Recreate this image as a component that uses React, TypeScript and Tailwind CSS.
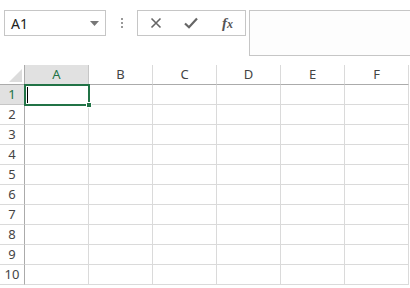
import React from 'react';

const cols = ['A', 'B', 'C', 'D', 'E', 'F'];
const rows = [1, 2, 3, 4, 5, 6, 7, 8, 9, 10];

export default function App() {
  return (
    <div className="h-[288px] w-[410px] overflow-hidden bg-white font-['Noto_Sans',sans-serif] text-[#444]">
      {/* Formula bar */}
      <div className="flex h-[65px] items-start pt-[10px]">
        <div className="ml-[4px] flex h-[26px] w-[102px] items-center justify-between border border-[#c6c6c6] bg-white pl-[6px] pr-[6px]">
          <span className="text-[14px] text-[#222]">A1</span>
          <svg width="9" height="5" viewBox="0 0 9 5">
            <path d="M0 0h9L4.5 5z" fill="#777" />
          </svg>
        </div>
        <div className="ml-[15px] mt-[8px] flex flex-col gap-[2px]">
          <span className="h-[2px] w-[2px] bg-[#999]" />
          <span className="h-[2px] w-[2px] bg-[#999]" />
          <span className="h-[2px] w-[2px] bg-[#999]" />
        </div>
        <div className="ml-[14px] flex h-[26px] w-[109px] items-center border border-[#c6c6c6] bg-white">
          <svg className="ml-[12px]" width="12" height="12" viewBox="0 0 12 12">
            <path d="M1.5 1.5l9 9M10.5 1.5l-9 9" stroke="#666" strokeWidth="1.6" />
          </svg>
          <svg className="ml-[22px]" width="14" height="12" viewBox="0 0 14 12">
            <path d="M1 6.5l4 3.8L13 1.5" stroke="#666" strokeWidth="2.2" fill="none" />
          </svg>
          <span className="ml-[24px] font-['Liberation_Serif',serif] text-[15px] font-semibold italic text-[#555]">
            f<span className="text-[12px]">x</span>
          </span>
        </div>
        <div className="ml-[3px] h-[46px] flex-1 border border-r-0 border-[#c6c6c6] bg-[#fdfdfd]" />
      </div>

      {/* Grid */}
      <div className="relative grid grid-cols-[25px_repeat(6,64px)] grid-rows-[20px_repeat(10,20px)]">
        <div className="relative border-r border-b border-[#ababab] bg-white">
          <svg className="absolute bottom-[2px] right-[2px]" width="13" height="13" viewBox="0 0 13 13">
            <path d="M13 0v13H0z" fill="#dcdcdc" />
          </svg>
        </div>
        {cols.map((c) => (
          <div
            key={c}
            className={
              c === 'A'
                ? 'flex items-center justify-center border-r border-b border-r-[#c6c6c6] border-b-[#ababab] bg-[#e1e1e1] text-[13px] text-[#217346]'
                : 'flex items-center justify-center border-r border-b border-r-[#dadada] border-b-[#ababab] bg-white text-[13px] text-[#444]'
            }
          >
            {c}
          </div>
        ))}
        {rows.map((r) => (
          <React.Fragment key={r}>
            <div
              className={
                r === 1
                  ? 'flex items-center justify-center border-r border-b border-r-[#ababab] border-b-[#c6c6c6] bg-[#e1e1e1] text-[13px] text-[#217346]'
                  : 'flex items-center justify-center border-r border-b border-r-[#ababab] border-b-[#dadada] bg-white text-[13px] text-[#444]'
              }
            >
              {r}
            </div>
            {cols.map((c) => (
              <div key={c} className="border-r border-b border-[#dadada] bg-white" />
            ))}
          </React.Fragment>
        ))}

        {/* Selected cell A1 */}
        <div className="absolute left-[24px] top-[19px] h-[22px] w-[66px] border-2 border-[#217346]">
          <div className="ml-[1px] mt-[1px] h-[16px] w-[1px] bg-black" />
          <div className="absolute -bottom-[4px] -right-[4px] h-[6px] w-[6px] border border-white bg-[#217346]" />
        </div>
      </div>
    </div>
  );
}
